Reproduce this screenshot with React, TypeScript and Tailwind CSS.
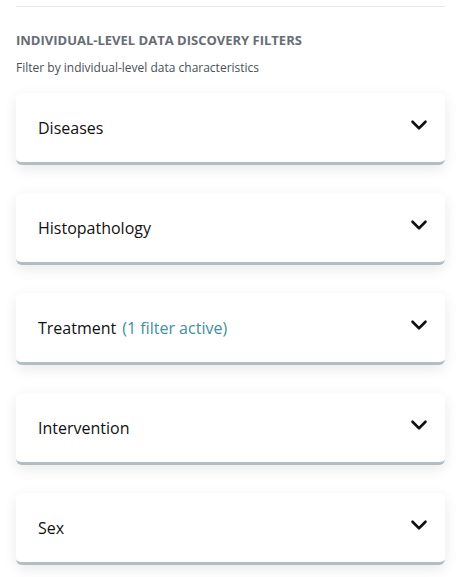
import { ChevronDown } from 'lucide-react'

const filters = [
  { label: 'Diseases' },
  { label: 'Histopathology' },
  { label: 'Treatment', active: '(1 filter active)' },
  { label: 'Intervention' },
  { label: 'Sex' },
]

export default function App() {
  return (
    <div className="min-h-screen bg-white pl-4 pr-[21px] pt-[6px] font-['Open_Sans',sans-serif]">
      <div className="border-t border-[#e6e8eb]" />

      {/* heading */}
      <div className="mt-[25px]">
        <h2 className="text-[13px] font-bold uppercase leading-4 text-[#676c74]">
          Individual-level data discovery filters
        </h2>
        <p className="mt-[13px] text-[12px] leading-[14px] text-[#4a4f57]">
          Filter by individual-level data characteristics
        </p>
      </div>

      {/* filter cards */}
      <div className="mt-[18px] flex flex-col gap-[28px]">
        {filters.map((f) => (
          <button
            key={f.label}
            className="flex h-[72px] w-full items-center justify-between rounded-[6px] border-b-[3px] border-[#b3bdc4] bg-white pl-[22px] pr-[13px] text-left shadow-[0_4px_14px_rgba(0,0,0,0.09)]"
          >
            <span className="text-[16px] text-[#111]">
              {f.label}
              {f.active && <span className="ml-[6px] text-[#3f8f9c]">{f.active}</span>}
            </span>
            <ChevronDown className="mb-[6px] h-[26px] w-[26px] text-[#111]" strokeWidth={2.4} />
          </button>
        ))}
      </div>
    </div>
  )
}
